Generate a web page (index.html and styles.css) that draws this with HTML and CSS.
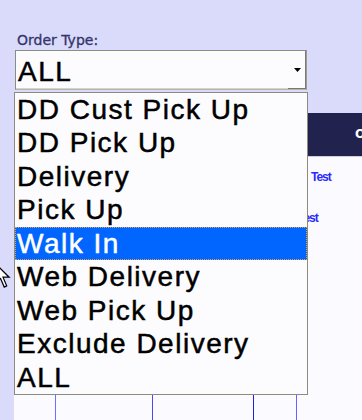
FILE: index.html
```html
<!DOCTYPE html>
<html>
<head>
<meta charset="utf-8">
<link rel="stylesheet" href="styles.css">
</head>
<body>
<div class="page">
  <div class="filter">
    <label class="filter-label">Order Type:</label>
    <div class="combo">
      <span class="combo-value">ALL</span>
      <span class="combo-btn"><svg width="7" height="4" viewBox="0 0 7 4"><path d="M0 0H7L3.5 4Z" fill="#000"/></svg></span>
    </div>
  </div>

  <div class="grid">
    <div class="grid-head"><span class="head-title">Order</span></div>
    <div class="grid-body">
      <div class="grid-row">
        <div class="cell c1"></div><div class="cell c2"></div><div class="cell c3"></div><div class="cell c4"></div>
        <div class="cell c5"><span class="link link-a">Test</span></div>
      </div>
      <div class="grid-row">
        <div class="cell c1"></div><div class="cell c2"></div><div class="cell c3"></div><div class="cell c4"></div>
        <div class="cell c5"><span class="link link-b">Test</span></div>
      </div>
      <div class="grid-row">
        <div class="cell c1"></div><div class="cell c2"></div><div class="cell c3"></div><div class="cell c4"></div><div class="cell c5"></div>
      </div>
      <div class="grid-row">
        <div class="cell c1"></div><div class="cell c2"></div><div class="cell c3"></div><div class="cell c4"></div><div class="cell c5"></div>
      </div>
      <div class="grid-row">
        <div class="cell c1"></div><div class="cell c2"></div><div class="cell c3"></div><div class="cell c4"></div><div class="cell c5"></div>
      </div>
      <div class="grid-row">
        <div class="cell c1"></div><div class="cell c2"></div><div class="cell c3"></div><div class="cell c4"></div><div class="cell c5"></div>
      </div>
      <div class="grid-row">
        <div class="cell c1"></div><div class="cell c2"></div><div class="cell c3"></div><div class="cell c4"></div><div class="cell c5"></div>
      </div>
    </div>
  </div>

  <ul class="dropdown">
    <li class="option">DD Cust Pick Up</li>
    <li class="option">DD Pick Up</li>
    <li class="option">Delivery</li>
    <li class="option">Pick Up</li>
    <li class="option selected">Walk In</li>
    <li class="option">Web Delivery</li>
    <li class="option">Web Pick Up</li>
    <li class="option">Exclude Delivery</li>
    <li class="option">ALL</li>
  </ul>

  <svg class="cursor" width="16" height="26" viewBox="0 0 13 21">
    <path d="M0.5 0.5V16.5L4.5 12.5L7.5 19.5L9.5 18.5L6.5 11.5H11.5Z" fill="#fff" stroke="#000" stroke-width="1" stroke-linejoin="miter"/>
  </svg>
</div>
</body>
</html>
```

FILE: styles.css
```css
* { box-sizing: border-box; }

html, body {
  margin: 0;
  padding: 0;
}

body {
  width: 362px;
  height: 420px;
  overflow: hidden;
  background: #dadafa;
  font-family: "Liberation Sans", Arial, sans-serif;
}

.page {
  position: relative;
  width: 362px;
  height: 420px;
  overflow: hidden;
}

.filter {
  padding: 32px 0 0 15px;
}

.filter-label {
  display: block;
  margin-left: 2px;
  height: 16px;
  font-family: "DejaVu Sans", Verdana, sans-serif;
  font-size: 14px;
  line-height: 16px;
  color: #34346a;
  -webkit-text-stroke: 0.3px #34346a;
}

.combo {
  margin-top: 2px;
  width: 292px;
  height: 40px;
  display: flex;
  align-items: stretch;
  background: #fcfcff;
  border: 1px solid #8c8c82;
  border-right-color: #9c9c92;
  border-bottom-color: #b4b4aa;
  box-shadow: inset -1px -1px 0 #d4d4cc;
}

.combo-value {
  flex: 1;
  padding-left: 2px;
  height: 38px;
  line-height: 42px;
  font-size: 28px;
  letter-spacing: 1.5px;
  color: #000;
  -webkit-text-stroke: 0.5px #000;
  overflow: hidden;
}

.combo-btn {
  width: 18px;
  display: flex;
  align-items: center;
  justify-content: center;
  padding-bottom: 1px;
  box-shadow: inset -1px -1px 0 #7a7a72;
}

.grid {
  margin: 23px 0 0 14px;
  width: 348px;
}

.grid-head {
  height: 44px;
  background: #22224f;
  white-space: nowrap;
  overflow: hidden;
  border-bottom: 1px solid #cfcfd8;
}

.head-title {
  display: block;
  padding: 14px 0 0 341px;
  font-family: "DejaVu Sans", Verdana, sans-serif;
  font-size: 12px;
  font-weight: bold;
  line-height: 14px;
  color: #ffffff;
}

.grid-body {
  background: #fafaff;
  height: 263px;
  overflow: hidden;
}

.grid-row {
  display: grid;
  grid-template-columns: 41px 97px 101px 43px 66px;
  height: 41px;
}

.cell {
  height: 41px;
  white-space: nowrap;
  overflow: hidden;
}

.c2 { border-left: 1px solid #7070ff; }
.c3 { border-left: 1px solid #4a4af0; }
.c4 { border-left: 1px solid #2020d8; }
.c5 { border-left: 1px solid #6464ff; }

.link {
  display: block;
  font-family: "Liberation Sans", Arial, sans-serif;
  font-size: 12px;
  font-weight: bold;
  letter-spacing: -1px;
  line-height: 14px;
  color: #2a2aff;
  padding-top: 13px;
}

.link-a { padding-left: 14px; }
.link-b { padding-left: 1px; }

.dropdown {
  position: absolute;
  left: 14px;
  top: 92px;
  width: 294px;
  height: 303px;
  margin: 0;
  padding: 0;
  list-style: none;
  background: #fcfcff;
  border: 1px solid #8c8c7c;
}

.option {
  height: 33.44px;
  line-height: 33.44px;
  padding-left: 2px;
  font-size: 28px;
  letter-spacing: 1.5px;
  color: #000;
  -webkit-text-stroke: 0.5px #000;
  white-space: nowrap;
}

.option.selected {
  background: #0066ff;
  color: #ffffff;
  -webkit-text-stroke: 0.5px #ffffff;
  outline: 1px dotted #d8a050;
  outline-offset: -1px;
}

.cursor {
  position: absolute;
  left: -5px;
  top: 263px;
}
```
